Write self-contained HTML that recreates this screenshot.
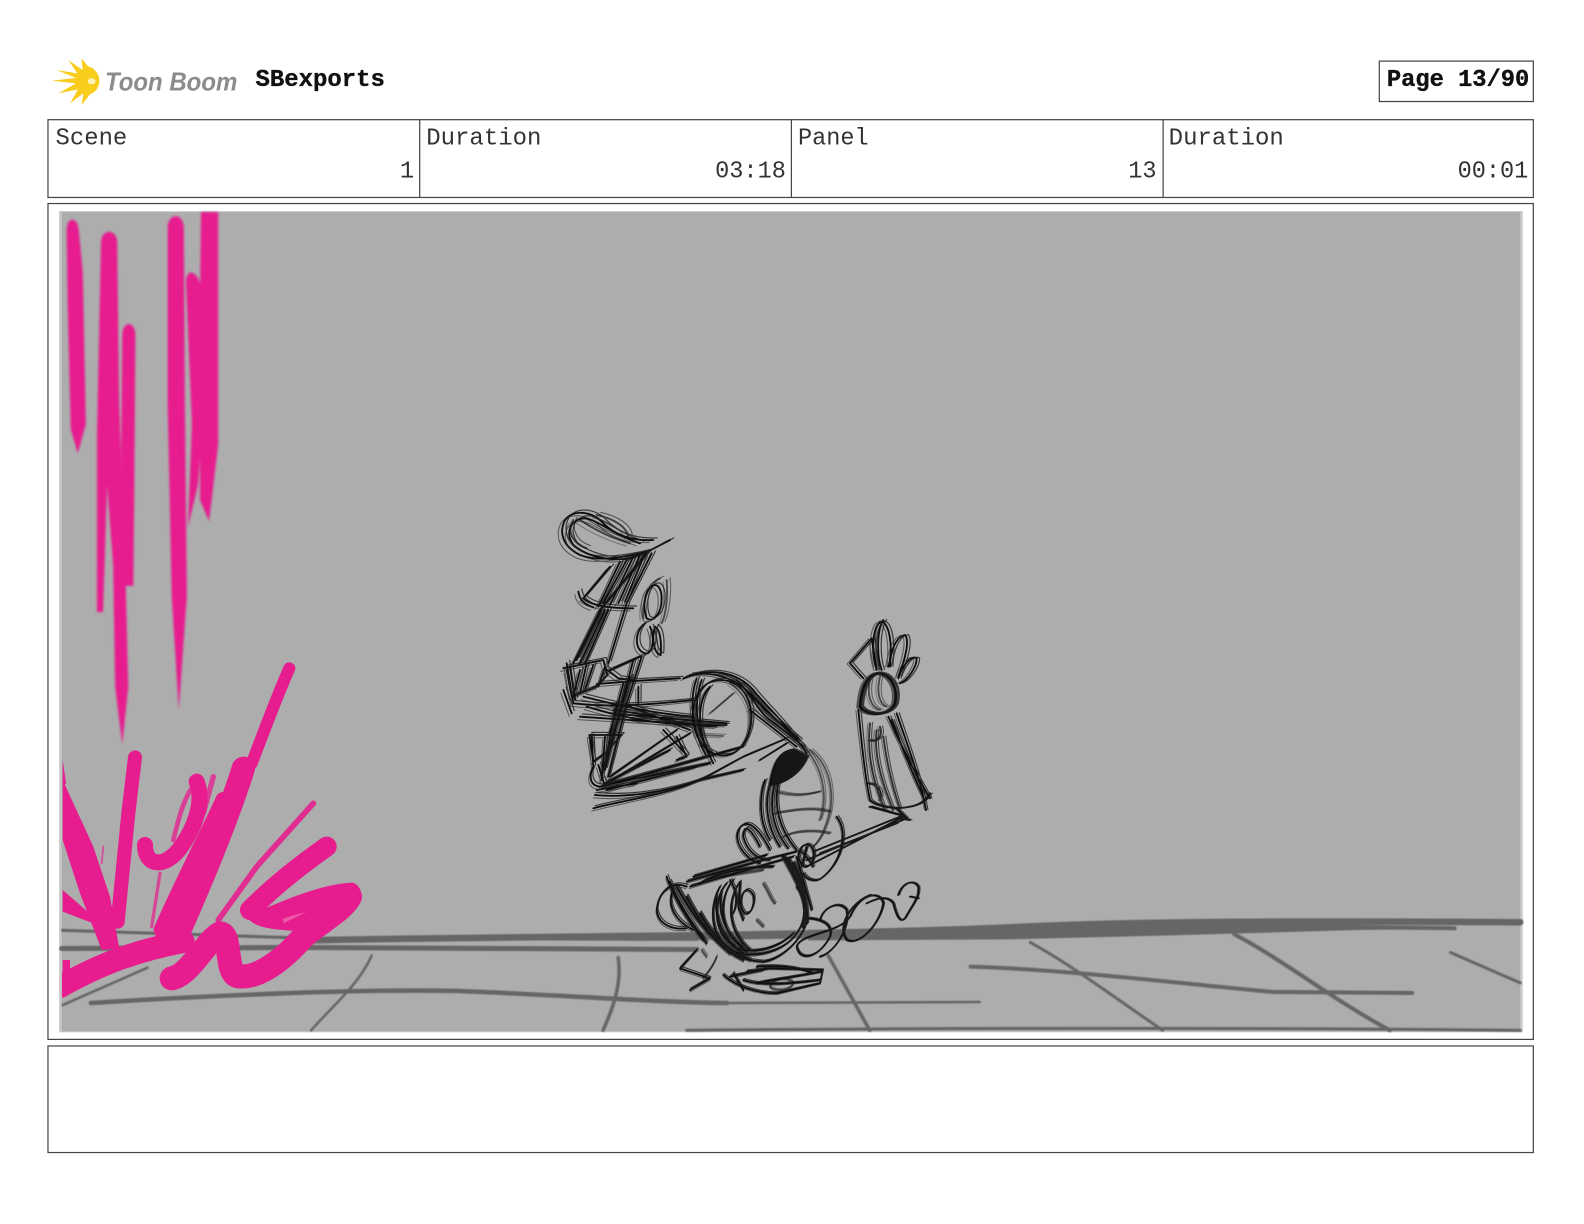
<!DOCTYPE html>
<html>
<head>
<meta charset="utf-8">
<title>Page 13/90</title>
<style>
html,body{margin:0;padding:0;background:#fff;width:1584px;height:1224px;overflow:hidden}
svg{display:block}
text{font-family:"Liberation Mono",monospace}
</style>
</head>
<body>
<svg width="1584" height="1224" viewBox="0 0 1584 1224" xmlns="http://www.w3.org/2000/svg">
<defs>
<filter id="s" x="-5%" y="-5%" width="110%" height="110%"><feGaussianBlur stdDeviation="0.45"/></filter>
<filter id="s2" x="-5%" y="-5%" width="110%" height="110%"><feGaussianBlur stdDeviation="1"/></filter>
<clipPath id="imgclip"><rect x="62" y="211" width="1459" height="820"/></clipPath>
<g id="fig" fill="none" stroke-linecap="round" stroke-linejoin="round">
<!-- hair top -->
<path d="M370,150 C300,155 250,130 220,100 C190,65 130,55 105,90 C85,130 100,170 150,195 C200,215 270,205 350,185"/>
<path d="M420,150 C380,170 350,190 300,205 C240,215 170,200 130,165 C105,130 120,90 160,85 C200,85 240,130 330,160"/>
<path d="M130,90 C110,120 125,160 170,175 M200,75 C250,85 290,110 295,140 M150,90 C180,110 230,140 300,160" stroke-opacity=".7"/>
<!-- upper leg -->
<path d="M350,190 L210,360 L130,520"/>
<path d="M365,190 L290,340 L235,520"/>
<path d="M240,230 L160,325 Q190,355 310,355"/>
<path d="M330,195 L265,340 M310,200 L240,345 M290,210 L220,340 M270,215 L205,350 M345,190 L285,335"/>
<path d="M225,360 L150,520 M235,360 L165,520 M215,360 L140,510"/>
<path d="M145,305 Q150,340 190,352"/>
<!-- ear / foot -->
<path d="M375,285 C345,290 335,350 350,385 C370,400 395,370 395,325 C395,300 385,285 375,285Z"/>
<path d="M390,265 C350,280 335,350 340,385 M410,270 C415,330 405,380 395,400" stroke-opacity=".6"/>
<path d="M345,400 C315,420 310,480 345,490 C370,495 375,440 360,410"/>
<path d="M375,410 C365,440 370,490 392,495 C395,450 390,420 375,410Z"/>
<!-- block -->
<path d="M100,535 L220,510 L232,555 L200,590 L125,620 L110,540"/>
<path d="M110,520 L130,640 M225,530 L205,590 M100,600 L125,670 M150,540 L130,620 M170,520 L150,610 M190,525 L165,600 M120,530 L135,630"/>
<path d="M232,540 L265,565 L310,570 M330,500 L240,540 M325,590 L325,640"/>
<path d="M310,510 L275,640 L225,840 M335,500 L290,640 L235,860 M280,580 L240,730 M260,640 L225,820 M300,560 L255,720 M290,600 L215,850"/>
<!-- thigh -->
<path d="M200,582 L330,572 L450,565"/>
<path d="M130,640 C250,655 400,640 490,630"/>
<path d="M150,680 L520,705 M170,650 C300,690 420,710 590,705 M240,670 L590,700 M300,690 L560,710"/>
<path d="M250,660 C330,670 430,690 480,705 M300,650 L480,720 M400,720 L470,795 M160,620 C240,640 360,670 490,680"/>
<!-- hip -->
<path d="M570,570 C510,570 480,640 490,700 C505,780 560,810 610,790 C660,760 680,680 650,620 C630,580 600,570 570,570Z"/>
<path d="M540,590 C500,630 500,730 540,790 M500,565 C480,620 480,710 530,800 M515,570 C490,640 495,720 550,820"/>
<path d="M600,580 C660,620 680,690 640,770 M500,735 L580,738 M540,670 L610,610" stroke-opacity=".5"/>
<!-- torso upper -->
<path d="M460,565 C540,530 620,545 670,600 C700,640 770,700 830,790"/>
<path d="M480,555 C560,540 630,570 690,640 L820,770"/>
<path d="M660,660 L800,770 M650,600 C690,650 740,690 810,750 M620,570 C670,620 680,660 720,690 L810,760"/>
<!-- lower leg -->
<path d="M178,735 L275,735 L225,790 L190,815 Z"/>
<path d="M185,740 L190,830 C175,860 180,890 215,890 L530,800"/>
<path d="M215,890 L480,730 M240,860 L440,720 M225,880 L420,780 M250,880 L540,820 M210,890 L640,770"/>
<path d="M190,955 C280,930 420,915 530,860 L640,800"/>
<path d="M195,915 C290,925 410,905 510,870 M510,870 L640,840 M200,900 L320,880 M230,900 L500,830"/>
<path d="M205,825 L225,890 M225,740 L215,870"/>
<path d="M440,740 L470,800 L440,810"/>
<!-- dark patch -->
<path d="M720,885 C730,820 750,780 790,780 L830,800 C810,850 770,880 720,885Z" fill="#141414"/>
<path d="M770,760 L690,810 M640,800 L770,745"/>
<!-- torso lower -->
<path d="M705,870 C685,930 690,1000 720,1050 M725,870 C700,930 710,1010 750,1070 M745,880 C730,950 750,1020 800,1080 M735,880 C715,950 730,1020 775,1075"/>
<path d="M840,780 C900,820 920,920 890,1000 C880,1030 870,1050 850,1070" stroke-opacity=".55"/>
<path d="M820,770 C880,830 895,920 870,990" stroke-opacity=".55"/>
<path d="M740,905 C790,920 830,915 870,905 M735,970 C790,960 850,950 900,965 M760,1040 C800,1020 860,1020 900,1030" stroke-opacity=".6"/>
<!-- back loop -->
<path d="M720,1080 C690,1020 650,975 625,1020 C610,1060 650,1110 690,1120"/>
<path d="M690,1070 C660,1010 640,1000 640,1040 C650,1080 680,1110 720,1110"/>
<path d="M920,980 C960,1030 930,1120 880,1160 C860,1180 830,1170 820,1150"/>
<path d="M825,1065 C800,1075 800,1115 825,1130 C850,1130 860,1090 845,1070 C838,1062 830,1062 825,1065Z"/>
<path d="M810,1080 C830,1100 840,1110 850,1130 M830,1070 L815,1130"/>
<!-- arm -->
<path d="M470,1175 L700,1110 L800,1085"/>
<path d="M480,1190 L720,1120 L790,1100 M490,1160 L710,1095"/>
<path d="M830,1130 L1120,980 M850,1085 L1115,978 M830,1110 L1130,985 M870,1090 L1100,1000 M1100,985 L1140,990"/>
<!-- spine to head -->
<path d="M760,1100 C800,1170 830,1230 825,1280 M775,1110 C810,1170 835,1240 830,1300 M790,1120 C825,1190 835,1260 820,1310" stroke-width="8"/>
<path d="M800,1100 L845,1260"/>
<!-- head -->
<path d="M570,1190 C530,1260 550,1350 600,1380 C660,1410 760,1390 800,1330 C830,1290 830,1230 800,1190"/>
<path d="M590,1180 C540,1240 555,1340 620,1375 C680,1395 750,1370 790,1330"/>
<path d="M610,1170 C560,1230 570,1330 640,1370 M630,1175 C590,1230 590,1320 660,1380 M560,1210 C550,1280 580,1350 640,1390 M575,1200 C560,1270 590,1340 650,1385"/>
<path d="M520,1300 C570,1380 620,1410 700,1415 C740,1410 800,1370 825,1310"/>
<path d="M490,1260 C530,1320 560,1370 640,1410 M470,1220 C500,1280 540,1340 600,1390 M440,1190 C480,1260 510,1310 570,1360 M510,1270 C550,1340 590,1380 660,1410" stroke-width="6"/>
<path d="M650,1200 C630,1210 625,1250 645,1270 C665,1275 675,1240 670,1215 C665,1205 655,1198 650,1200Z"/>
<path d="M630,1180 L625,1250 L640,1290 M600,1170 C620,1200 625,1230 610,1270"/>
<path d="M700,1180 C720,1210 720,1225 735,1240 M540,1165 L700,1140 M680,1290 L700,1310" stroke-opacity=".7"/>
<path d="M510,1180 C560,1150 640,1130 730,1130"/>
<!-- hair left loop -->
<path d="M470,1190 C420,1170 385,1210 380,1260 C385,1300 420,1320 470,1315"/>
<path d="M410,1160 C430,1220 470,1290 520,1350 M420,1175 C440,1230 480,1290 530,1360"/>
<path d="M430,1195 C410,1240 430,1290 490,1320"/>
<!-- lower scribbles -->
<path d="M500,1380 L450,1435 L540,1465 L480,1500"/>
<path d="M530,1400 L515,1380 M560,1400 C550,1430 530,1450 520,1465" stroke-opacity=".6"/>
<path d="M580,1455 C620,1490 680,1510 740,1510 L870,1480 L878,1440 L720,1435 L650,1445"/>
<path d="M610,1450 L640,1500 M600,1460 L700,1440 M640,1470 C700,1490 790,1480 870,1470 M680,1480 C720,1470 800,1460 875,1445"/>
<path d="M720,1490 C730,1460 780,1460 790,1480 C780,1505 730,1505 720,1490" stroke-opacity=".6"/>
<path d="M680,1430 C740,1425 800,1430 850,1450"/>
<!-- curl -->
<path d="M825,1285 C870,1285 910,1300 900,1340 C870,1400 810,1420 800,1370 C810,1330 930,1330 960,1280 C990,1210 1050,1200 1060,1240 C1050,1300 990,1370 950,1350 C920,1310 960,1240 1020,1215"/>
<path d="M870,1290 C880,1250 930,1230 950,1260 C960,1320 910,1390 870,1400 M1010,1240 C1050,1220 1075,1220 1090,1240 C1100,1280 1110,1300 1125,1285 C1150,1240 1170,1220 1165,1190 C1150,1165 1115,1180 1105,1215 M1165,1225 L1140,1220"/>
<!-- forearm -->
<path d="M985,660 C995,760 1005,860 1020,930 C1040,950 1100,960 1140,950 C1170,945 1190,930 1200,910"/>
<path d="M1075,680 C1110,760 1160,860 1200,925 M1100,670 C1130,760 1170,860 1188,960 M1085,690 C1120,780 1150,860 1180,920"/>
<path d="M1020,700 C1010,790 1030,880 1065,960 M1040,720 C1030,800 1060,890 1090,960 M1060,740 C1070,820 1090,900 1110,955 M1010,880 C1040,880 1060,900 1050,930 M1020,750 C1040,760 1060,740 1050,710" stroke-opacity=".8"/>
<path d="M1020,950 L1110,975 M1100,955 L1130,985"/>
<!-- fist -->
<path d="M990,650 C995,590 1010,560 1040,550 C1080,550 1105,590 1095,640 C1080,680 1010,680 990,650Z" stroke-width="8"/>
<path d="M1020,570 C1010,610 1020,650 1050,660 M1050,560 C1040,600 1045,640 1070,650" stroke-opacity=".6"/>
<path d="M1000,565 L960,520 L1025,445 L1040,540"/>
<path d="M1040,540 C1020,480 1030,400 1055,395 C1080,400 1090,480 1075,530 M1060,390 C1040,420 1040,500 1055,540"/>
<path d="M1080,530 C1080,480 1100,440 1125,435 C1140,450 1125,510 1105,560"/>
<path d="M1105,565 C1120,520 1145,495 1160,505 C1160,530 1135,570 1110,580"/>
</g>
</defs>

<rect width="1584" height="1224" fill="#fff"/>

<!-- logo, true coords via zoom frame -->
<g transform="translate(40,40) scale(.33333)">
<path fill="#f8cd1c" d="M178,122 C178,100 160,82 145,80 L125,55 L128,90 L85,60 L112,100 L50,90 L108,114 L35,122 L108,130 L55,160 L114,148 L90,190 L130,160 L125,195 L150,163 C168,156 178,142 178,122Z"/>
<ellipse cx="155" cy="124" rx="12" ry="9" fill="#fff3b8"/>
<text x="195" y="152" font-size="78" font-style="italic" font-weight="bold" fill="#8b8b8b" textLength="397" lengthAdjust="spacingAndGlyphs" style='font-family:"Liberation Sans",sans-serif'>Toon Boom</text>
</g>

<g transform="scale(1.0101)">
<text x="253" y="85" font-size="23.6" font-weight="bold" fill="#111" stroke="#111" stroke-width=".35" textLength="128" lengthAdjust="spacingAndGlyphs">SBexports</text>

<rect x="1365.5" y="60.5" width="152.5" height="40" fill="none" stroke="#444" stroke-width="1.2"/>
<text x="1373" y="85" font-size="23.6" font-weight="bold" fill="#111" stroke="#111" stroke-width=".35" textLength="141" lengthAdjust="spacingAndGlyphs">Page 13/90</text>

<!-- info table -->
<rect x="47.5" y="118.5" width="1470.5" height="77" fill="none" stroke="#444" stroke-width="1.2"/>
<path d="M415.5,118V195M783.5,118V195M1151.5,118V195" stroke="#444" stroke-width="1.2"/>
<g font-size="23.6" fill="#333">
<text x="55" y="143" textLength="71" lengthAdjust="spacingAndGlyphs">Scene</text>
<text x="422" y="143" textLength="114" lengthAdjust="spacingAndGlyphs">Duration</text>
<text x="790" y="143" textLength="70" lengthAdjust="spacingAndGlyphs">Panel</text>
<text x="1157" y="143" textLength="114" lengthAdjust="spacingAndGlyphs">Duration</text>
<text x="410" y="175.5" text-anchor="end">1</text>
<text x="708" y="175.5" textLength="70" lengthAdjust="spacingAndGlyphs">03:18</text>
<text x="1117" y="175.5" textLength="28" lengthAdjust="spacingAndGlyphs">13</text>
<text x="1443" y="175.5" textLength="70" lengthAdjust="spacingAndGlyphs">00:01</text>
</g>

<!-- panel frame -->
<rect x="47.5" y="201.5" width="1470.5" height="827.5" fill="#fff" stroke="#444" stroke-width="1.2"/>
<rect x="47.5" y="1035.5" width="1470.5" height="105.5" fill="#fff" stroke="#444" stroke-width="1.2"/>

<!-- image -->
<rect x="58.5" y="209" width="1449" height="813" fill="#c9c9c9"/>
<rect x="61" y="210" width="1444" height="811" fill="#adadad"/>

<!-- floor -->
<g fill="none" stroke="#666" stroke-linecap="round" stroke-linejoin="round" filter="url(#s)">
<path d="M300,931 C500,927 800,927 1000,918 C1150,911 1300,912 1505,913" stroke-width="6.5"/>
<path d="M61,939 L300,938 L690,940" stroke-width="5"/>
<path d="M62,921 L310,929 L690,930" stroke-width="3"/>
<path d="M625,929 L1000,924" stroke-width="5"/>
<path d="M1000,921 L1200,916 L1440,919" stroke-width="4"/>
<path d="M90,993 C200,986 350,979 450,981 C560,985 640,992 720,993" stroke-width="4.5"/>
<path d="M720,993 L970,992" stroke-width="2.5"/>
<path d="M62,995 L146,958" stroke-width="2.5"/>
<path d="M368,946 C355,975 330,995 308,1020" stroke-width="2.5"/>
<path d="M612,948 C616,975 606,1000 597,1020" stroke-width="3.5"/>
<path d="M820,946 L861,1020" stroke-width="3.5"/>
<path d="M1020,933 C1060,955 1100,985 1151,1020" stroke-width="3"/>
<path d="M1222,925 C1270,950 1320,990 1376,1020" stroke-width="4"/>
<path d="M961,957 C1060,960 1180,975 1260,982 L1398,983" stroke-width="4"/>
<path d="M1436,943 L1505,973" stroke-width="3"/>
<path d="M680,1020 C900,1018 1200,1017 1505,1020" stroke-width="3"/>
</g>
<polygon fill="#666" points="800,921 1000,917 1120,915 1300,916 1440,918 1300,922 1160,926 1000,930 800,931" filter="url(#s)"/>

<!-- pink: tall streaks -->
<g fill="#e71d8f" filter="url(#s2)">
<path d="M66,228 C66,214 77,214 78,228 L82,270 L85,420 L77,449 L70,425 L67,300Z"/>
<path d="M100,240 C100,226 116,226 116,240 L118,400 L124,560 L127,680 L121,737 L114,680 L112,560 L106,480 L102,606 L96,606 L96,430 Z"/>
<path d="M121,332 C121,317 134,317 134,332 L133,480 L132,580 L124,580 L120,450 Z"/>
<path d="M166,226 C166,210 182,210 182,226 L183,400 L185,590 L177,703 L170,590 L166,400 Z"/>
<path d="M184,277 C186,264 197,270 199,285 L202,400 L196,480 L186,522 L190,420 Z"/>
<path d="M199,210 L216,210 L216,440 L207,516 L198,495 L198,290Z"/>
</g>
</g>

<!-- pink: burst, zoom-3 coords -->
<g clip-path="url(#imgclip)">
<g transform="translate(50,640) scale(.33333)" filter="url(#s2)">
<g fill="none" stroke="#e71d8f" stroke-linecap="round" stroke-linejoin="round">
<path d="M718,85 C680,170 640,280 605,370" stroke-width="36"/>
<path d="M580,385 C550,480 500,620 385,880" stroke-width="70"/>
<path d="M520,480 C470,590 400,720 335,870" stroke-width="48"/>
<path d="M255,352 L235,520 L203,845" stroke-width="42"/>
<path d="M285,615 C285,680 345,685 390,625 C430,570 465,490 440,425" stroke-width="48"/>
<path d="M440,425 C400,470 385,540 370,600" stroke-width="14" stroke-opacity=".75"/>
<path d="M490,410 L460,520" stroke-width="16" stroke-opacity=".75"/>
<path d="M790,490 L620,680 L505,840" stroke-width="17" stroke-opacity=".9"/>
<path d="M830,620 C760,670 680,730 600,810" stroke-width="60"/>
<path d="M30,1040 C120,990 220,940 400,905" stroke-width="68"/>
<path d="M365,1015 C420,1005 470,900 510,880 C545,880 525,990 560,1008 C620,1020 700,960 760,890 C820,840 880,810 900,770" stroke-width="72"/>
<path d="M330,700 L305,860" stroke-width="10" stroke-opacity=".7"/>
<path d="M160,620 L155,670" stroke-width="6" stroke-opacity=".6"/>
</g>
<g fill="#e71d8f">
<path d="M590,830 C700,780 820,730 910,728 C945,745 940,790 900,815 C840,860 780,880 700,870 C650,865 610,860 590,830Z"/>
<path d="M38,420 L130,620 L180,770 L208,925 L155,930 L90,760 L38,600 Z"/>
<path d="M38,750 L130,830 L130,850 L38,815 Z"/>
<path d="M38,360 L48,430 L38,440 Z"/>
<path d="M38,960 L60,960 L60,1000 L38,1070 Z"/>
</g>
<path d="M700,835 L770,815 L700,850Z" fill="#ec5aa9"/>
</g>
</g>

<!-- figure, zoom-2 coords -->
<g transform="translate(530,490) scale(.33333)" filter="url(#s)">
<use href="#fig" stroke="#0a0a0a" stroke-width="5.5"/>
<use href="#fig" stroke="#161616" stroke-width="3.5" transform="translate(7,-5) rotate(.4 600 800)" opacity=".8"/>
<use href="#fig" stroke="#222" stroke-width="3" transform="translate(-6,5) rotate(-.5 600 800)" opacity=".65"/>
</g>
</svg>
</body>
</html>
